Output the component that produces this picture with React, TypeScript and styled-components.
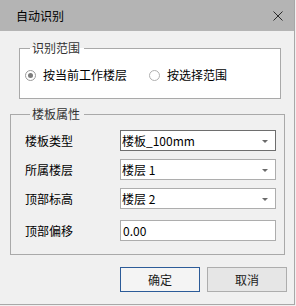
import React from "react";
import styled, { createGlobalStyle } from "styled-components";

const GlobalStyle = createGlobalStyle`
  html, body {
    margin: 0;
    padding: 0;
    background: #f0f0f0;
  }
  body {
    font-family: "Noto Sans CJK SC", "Liberation Sans", sans-serif;
    font-size: 12px;
    color: #000;
  }
  * { box-sizing: border-box; }
`;

const Window = styled.div`
  width: 295px;
  height: 305px;
  background: #f0f0f0;
  border-right: 1px solid #a8a8a8;
  border-bottom: 1px solid #a8a8a8;
  display: flex;
  flex-direction: column;
`;

const TitleBar = styled.div`
  height: 31px;
  flex: none;
  background: #b4b4b4;
  display: flex;
  align-items: center;
  justify-content: space-between;
  padding: 0 11px 0 16px;
`;

const Title = styled.span`
  font-size: 12px;
  line-height: 16px;
  color: #000;
`;

const CloseBtn = styled.span`
  display: flex;
  width: 10px;
  height: 10px;
`;

const Content = styled.div`
  display: flex;
  flex-direction: column;
  align-items: flex-start;
`;

const Group = styled.fieldset<{ $left: number; $width: number; $top: number; $bg: string }>`
  margin: ${(p) => p.$top}px 0 0 ${(p) => p.$left}px;
  width: ${(p) => p.$width}px;
  padding: 0;
  min-width: 0;
  border: 1px solid #a9a9a9;
  background: ${(p) => p.$bg};
`;

const Legend = styled.legend<{ $offset: number }>`
  margin-left: ${(p) => p.$offset}px;
  padding: 0 4px 0 2px;
  font-size: 12px;
  line-height: 16px;
  color: #333;
`;

const RadioRow = styled.div`
  display: flex;
  align-items: center;
  height: 38px;
  margin-bottom: 4px;
  padding-left: 5px;
  gap: 22px;
`;

const RadioOption = styled.label`
  display: flex;
  align-items: center;
  gap: 7px;
  line-height: 16px;
  color: #000;
`;

const RadioCircle = styled.span<{ $checked?: boolean }>`
  width: 11px;
  height: 11px;
  border-radius: 50%;
  border: 1px solid ${(p) => (p.$checked ? "#9a9a9a" : "#b0b0b0")};
  background: #fff;
  display: flex;
  align-items: center;
  justify-content: center;
  &::after {
    content: "";
    width: 5px;
    height: 5px;
    border-radius: 50%;
    background: ${(p) => (p.$checked ? "#7c7c7c" : "transparent")};
  }
`;

const FieldGrid = styled.div`
  display: grid;
  grid-template-columns: 95px 156px;
  row-gap: 8px;
  padding: 8px 0 13px 14px;
  align-items: center;
`;

const Label = styled.span<{ $shift?: number }>`
  line-height: 16px;
  color: #000;
  margin-top: ${(p) => p.$shift ?? 0}px;
`;

const Combo = styled.div<{ $focused?: boolean }>`
  height: 21px;
  background: #fff;
  border: 1px solid ${(p) => (p.$focused ? "#6e6e6e" : "#adadad")};
  display: flex;
  align-items: center;
  justify-content: space-between;
  padding: 0 7px 0 1px;
  line-height: 16px;
  color: #000;
`;

const Arrow = styled.span`
  width: 0;
  height: 0;
  border-left: 3px solid transparent;
  border-right: 3px solid transparent;
  border-top: 3px solid #6a6a6a;
  margin-top: 1px;
`;

const TextInput = styled.div`
  height: 21px;
  margin-top: 3px;
  background: #fff;
  border: 1px solid #adadad;
  display: flex;
  align-items: center;
  padding: 0 2px;
  line-height: 16px;
  color: #000;
`;

const ButtonRow = styled.div`
  display: flex;
  gap: 7px;
  margin: 12px 0 0 120px;
`;

const Button = styled.button<{ $primary?: boolean }>`
  width: 80px;
  height: 25px;
  padding: 0;
  font-family: inherit;
  font-size: 12px;
  line-height: 16px;
  color: #1a1a1a;
  background: ${(p) => (p.$primary ? "#f4f4f4" : "#e6e6e6")};
  border: 1px solid ${(p) => (p.$primary ? "#2c5b98" : "#adadad")};
`;

const fields: { label: string; value: string; focused?: boolean }[] = [
  { label: "楼板类型", value: "楼板_100mm", focused: true },
  { label: "所属楼层", value: "楼层 1" },
  { label: "顶部标高", value: "楼层 2" },
];

export default function App() {
  return (
    <>
      <GlobalStyle />
      <Window>
        <TitleBar>
          <Title>自动识别</Title>
          <CloseBtn>
            <svg width="10" height="10" viewBox="0 0 10 10">
              <path d="M0.5 0.5 L9.5 9.5 M9.5 0.5 L0.5 9.5" stroke="#2a2a2a" strokeWidth="1" fill="none" />
            </svg>
          </CloseBtn>
        </TitleBar>
        <Content>
          <Group $left={19} $width={262} $top={9} $bg="#fff">
            <Legend $offset={10}>识别范围</Legend>
            <RadioRow>
              <RadioOption>
                <RadioCircle $checked />
                按当前工作楼层
              </RadioOption>
              <RadioOption>
                <RadioCircle />
                按选择范围
              </RadioOption>
            </RadioRow>
          </Group>
          <Group $left={10} $width={275} $top={7} $bg="#f0f0f0">
            <Legend $offset={19}>楼板属性</Legend>
            <FieldGrid>
              {fields.map((f) => (
                <React.Fragment key={f.label}>
                  <Label>{f.label}</Label>
                  <Combo $focused={f.focused}>
                    <span>{f.value}</span>
                    <Arrow />
                  </Combo>
                </React.Fragment>
              ))}
              <Label $shift={3}>顶部偏移</Label>
              <TextInput>0.00</TextInput>
            </FieldGrid>
          </Group>
          <ButtonRow>
            <Button $primary>确定</Button>
            <Button>取消</Button>
          </ButtonRow>
        </Content>
      </Window>
    </>
  );
}
